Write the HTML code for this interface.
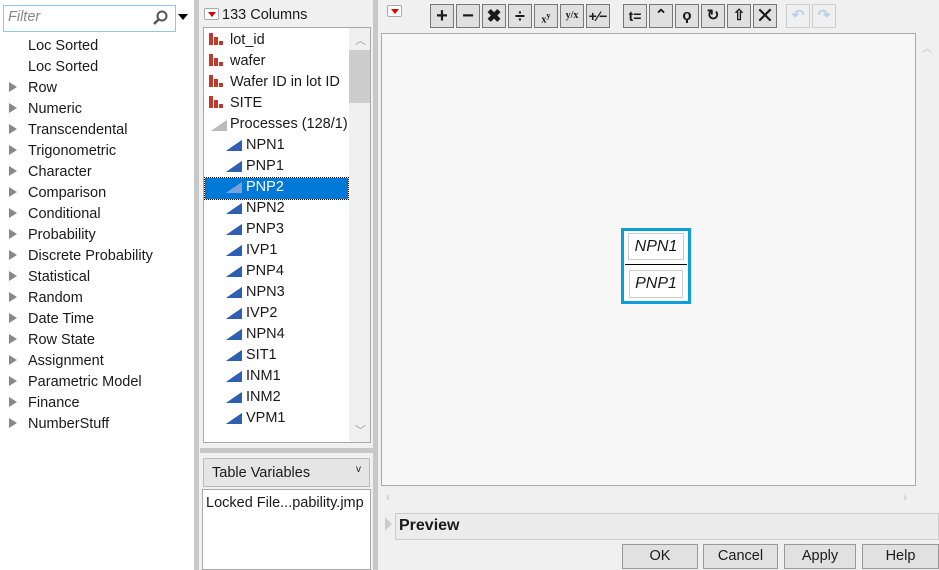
<!DOCTYPE html><html><head><style>
*{box-sizing:border-box;margin:0;padding:0}
body{width:939px;height:570px;position:relative;background:#f0f0f0;font-family:"Liberation Sans",sans-serif;font-size:14px;color:#1a1a1a;overflow:hidden}
.a{position:absolute}
.left{left:0;top:0;width:194px;height:570px;background:#fff}
.li{position:absolute;left:28px;font-size:14.5px;line-height:21px;margin-top:1px}
.tri{position:absolute;left:9px;width:0;height:0;border-left:8px solid #888;border-top:5px solid transparent;border-bottom:5px solid transparent}
.div{background:#c8c8c8}
.tb{position:absolute;top:4px;width:24px;height:24px;border:1px solid #777;background:#e0e0e0;font-weight:bold;text-align:center;line-height:22px;font-size:18px}
.col{position:absolute;left:230px;font-size:14.5px;line-height:21px;margin-top:1px}
.bar{position:absolute;left:209px;width:14px;height:12px}
.bar i{position:absolute;bottom:0;background:#c0392b;width:4px}
.wedge{position:absolute;left:226px;width:16px;height:11px;background:linear-gradient(to top left,#2f5fb3 50%,transparent 51%)}
.btn{position:absolute;top:544px;height:25px;border:1px solid #999;background:#e1e1e1;text-align:center;line-height:23px;font-size:14.5px}
.rdd{position:absolute;width:15px;height:12px;border:1px solid #aaa;background:#fff;border-radius:2px}
.rdd:after{content:"";position:absolute;left:3px;top:3px;border-top:5px solid #d00;border-left:4px solid transparent;border-right:4px solid transparent}
</style></head><body>
<div class="a left"></div>
<div class="a" style="left:3px;top:5px;width:173px;height:27px;border:1px solid #8cc8ee;background:#fff"></div>
<div class="a" style="left:8px;top:9px;color:#888;font-style:italic;font-size:14.5px">Filter</div>
<svg class="a" style="left:152px;top:10px" width="16" height="16"><circle cx="10" cy="6" r="4.5" fill="none" stroke="#555" stroke-width="2"/><line x1="7" y1="9" x2="2" y2="14" stroke="#555" stroke-width="2.5"/></svg>
<div class="a" style="left:175px;top:8px;width:1px;height:22px;background:#8cc8ee"></div>
<div class="a" style="left:178px;top:14px;border-top:6px solid #000;border-left:5px solid transparent;border-right:5px solid transparent"></div>
<div class="li" style="top:35px">Loc Sorted</div>
<div class="li" style="top:56px">Loc Sorted</div>
<div class="tri" style="top:82px"></div><div class="li" style="top:77px">Row</div>
<div class="tri" style="top:103px"></div><div class="li" style="top:98px">Numeric</div>
<div class="tri" style="top:124px"></div><div class="li" style="top:119px">Transcendental</div>
<div class="tri" style="top:145px"></div><div class="li" style="top:140px">Trigonometric</div>
<div class="tri" style="top:166px"></div><div class="li" style="top:161px">Character</div>
<div class="tri" style="top:187px"></div><div class="li" style="top:182px">Comparison</div>
<div class="tri" style="top:208px"></div><div class="li" style="top:203px">Conditional</div>
<div class="tri" style="top:229px"></div><div class="li" style="top:224px">Probability</div>
<div class="tri" style="top:250px"></div><div class="li" style="top:245px">Discrete Probability</div>
<div class="tri" style="top:271px"></div><div class="li" style="top:266px">Statistical</div>
<div class="tri" style="top:292px"></div><div class="li" style="top:287px">Random</div>
<div class="tri" style="top:313px"></div><div class="li" style="top:308px">Date Time</div>
<div class="tri" style="top:334px"></div><div class="li" style="top:329px">Row State</div>
<div class="tri" style="top:355px"></div><div class="li" style="top:350px">Assignment</div>
<div class="tri" style="top:376px"></div><div class="li" style="top:371px">Parametric Model</div>
<div class="tri" style="top:397px"></div><div class="li" style="top:392px">Finance</div>
<div class="tri" style="top:418px"></div><div class="li" style="top:413px">NumberStuff</div>
<div class="a div" style="left:194px;top:0;width:5px;height:570px"></div>
<div class="a div" style="left:373px;top:0;width:5px;height:570px"></div>
<div class="rdd" style="left:204px;top:8px"></div>
<div class="a" style="left:222px;top:7px;font-size:14.5px">133 Columns</div>
<div class="a" style="left:203px;top:27px;width:168px;height:416px;border:1px solid #aaa;background:#fff"></div>
<div class="a" style="left:349px;top:28px;width:21px;height:414px;background:#f0f0f0"></div>
<div class="a" style="left:349px;top:50px;width:21px;height:53px;background:#cdcdcd"></div>
<div class="a" style="left:355px;top:32px;color:#999;font-size:11px">︿</div>
<div class="a" style="left:355px;top:422px;color:#999;font-size:11px">﹀</div>
<div class="a" style="left:205px;top:178px;width:143px;height:21px;background:#0078d7;outline:1px dotted #000"></div>
<div class="bar" style="top:33px"><i style="left:0;height:12px"></i><i style="left:5px;height:8px"></i><i style="left:10px;height:4px"></i></div><div class="col" style="top:29px">lot_id</div>
<div class="bar" style="top:54px"><i style="left:0;height:12px"></i><i style="left:5px;height:8px"></i><i style="left:10px;height:4px"></i></div><div class="col" style="top:50px">wafer</div>
<div class="bar" style="top:75px"><i style="left:0;height:12px"></i><i style="left:5px;height:8px"></i><i style="left:10px;height:4px"></i></div><div class="col" style="top:71px">Wafer ID in lot ID</div>
<div class="bar" style="top:96px"><i style="left:0;height:12px"></i><i style="left:5px;height:8px"></i><i style="left:10px;height:4px"></i></div><div class="col" style="top:92px">SITE</div>
<div class="wedge" style="left:211px;top:120px;background:linear-gradient(to top left,#bbb 50%,transparent 51%)"></div><div class="col" style="top:113px">Processes (128/1)</div>
<div class="wedge" style="top:140px"></div><div class="col" style="top:134px;left:246px">NPN1</div>
<div class="wedge" style="top:161px"></div><div class="col" style="top:155px;left:246px">PNP1</div>
<div class="wedge" style="top:182px;background:linear-gradient(to top left,#7aa0d8 50%,transparent 51%)"></div><div class="col" style="top:176px;left:246px;color:#fff">PNP2</div>
<div class="wedge" style="top:203px"></div><div class="col" style="top:197px;left:246px">NPN2</div>
<div class="wedge" style="top:224px"></div><div class="col" style="top:218px;left:246px">PNP3</div>
<div class="wedge" style="top:245px"></div><div class="col" style="top:239px;left:246px">IVP1</div>
<div class="wedge" style="top:266px"></div><div class="col" style="top:260px;left:246px">PNP4</div>
<div class="wedge" style="top:287px"></div><div class="col" style="top:281px;left:246px">NPN3</div>
<div class="wedge" style="top:308px"></div><div class="col" style="top:302px;left:246px">IVP2</div>
<div class="wedge" style="top:329px"></div><div class="col" style="top:323px;left:246px">NPN4</div>
<div class="wedge" style="top:350px"></div><div class="col" style="top:344px;left:246px">SIT1</div>
<div class="wedge" style="top:371px"></div><div class="col" style="top:365px;left:246px">INM1</div>
<div class="wedge" style="top:392px"></div><div class="col" style="top:386px;left:246px">INM2</div>
<div class="wedge" style="top:413px"></div><div class="col" style="top:407px;left:246px">VPM1</div>
<div class="a div" style="left:200px;top:448px;width:173px;height:5px"></div>
<div class="a" style="left:203px;top:458px;width:167px;height:29px;border:1px solid #bbb;background:#e5e5e5;padding:6px 0 0 8px;font-size:14.5px">Table Variables<span style="position:absolute;right:8px;top:5px;font-size:10px">v</span></div>
<div class="a" style="left:202px;top:489px;width:169px;height:81px;border:1px solid #aaa;background:#fff;padding:5px 0 0 3px;font-size:14.5px">Locked File...pability.jmp</div>
<div class="rdd" style="left:387px;top:5px"></div>
<div class="tb" style="left:430px;font-size:20px">+</div>
<div class="tb" style="left:456px;font-size:20px">−</div>
<div class="tb" style="left:482px">✖</div>
<div class="tb" style="left:508px">÷</div>
<div class="tb" style="left:534px;font-size:10px;font-family:'Liberation Serif'">x<sup>y</sup></div>
<div class="tb" style="left:560px;font-size:10px;font-family:'Liberation Serif'">y/x</div>
<div class="tb" style="left:586px;font-size:14px">+⁄−</div>
<div class="tb" style="left:623px;font-size:14px">t=</div>
<div class="tb" style="left:649px;font-size:15px">⌃</div>
<div class="tb" style="left:675px;font-size:15px">ϙ</div>
<div class="tb" style="left:701px;font-size:15px">↻</div>
<div class="tb" style="left:727px;font-size:15px">⇧</div>
<div class="tb" style="left:753px;font-weight:normal;font-size:22px">✕</div>
<div class="tb" style="left:786px;border-color:#ccc;background:#f0f0f0;color:#b8cfe8;font-size:15px">↶</div>
<div class="tb" style="left:812px;border-color:#ccc;background:#f0f0f0;color:#b8cfe8;font-size:15px">↷</div>
<div class="a" style="left:381px;top:33px;width:535px;height:453px;border:1px solid #aaa;background:#f7f7f7"></div>
<div class="a" style="left:621px;top:228px;width:70px;height:76px;border:3px solid #0a9fd6;background:#fff"></div>
<div class="a" style="left:628px;top:233px;width:56px;height:27px;border:1px solid #ccc;font-style:italic;font-size:16px;text-align:center;line-height:25px">NPN1</div>
<div class="a" style="left:625px;top:264px;width:62px;height:1px;background:#000"></div>
<div class="a" style="left:629px;top:270px;width:54px;height:28px;border:1px solid #ccc;font-style:italic;font-size:16px;text-align:center;line-height:26px">PNP1</div>
<div class="a" style="left:922px;top:40px;color:#bbb;font-size:10px">︿</div>
<div class="a" style="left:903px;top:490px;color:#bbb;font-size:12px">›</div>
<div class="a" style="left:386px;top:490px;color:#bbb;font-size:12px">‹</div>
<div class="a" style="left:385px;top:517px;border-left:7px solid #ccc;border-top:7px solid transparent;border-bottom:7px solid transparent"></div>
<div class="a" style="left:395px;top:513px;width:544px;height:27px;border:1px solid #ccc;background:#ececec;padding:3px 0 0 3px;font-weight:bold;font-size:16px">Preview</div>
<div class="btn" style="left:622px;width:76px">OK</div>
<div class="btn" style="left:703px;width:75px">Cancel</div>
<div class="btn" style="left:784px;width:72px">Apply</div>
<div class="btn" style="left:862px;width:77px">Help</div>
</body></html>
